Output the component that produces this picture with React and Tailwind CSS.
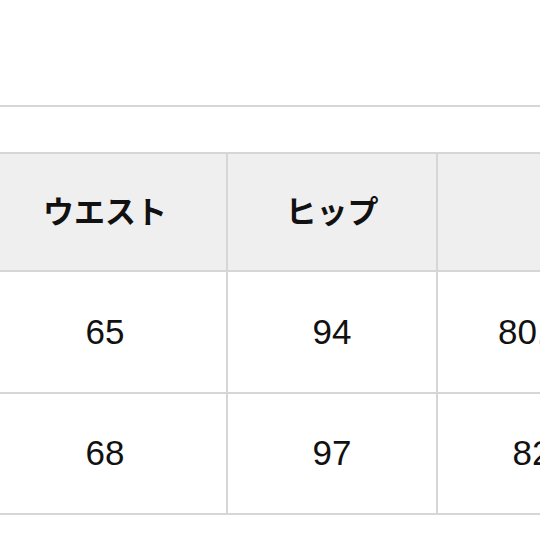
export default function App() {
  const header = ["ウエスト", "ヒップ", "股下"];
  const rows = [
    ["65", "94", "80.5"],
    ["68", "97", "82"],
  ];
  const widths = ["w-[244px]", "w-[210px]", "w-[190px]"];

  return (
    <div className="h-[540px] w-[540px] overflow-hidden bg-white">
      <div className="h-[105px]" />
      <div className="h-[2px] bg-[#d6d6d6]" />
      <div className="h-[45px]" />
      <div className="ml-[-16px] w-[700px] border-t-2 border-[#d6d6d6]">
        <div className="flex h-[118px] border-b-2 border-[#d6d6d6] bg-[#efefef]">
          {header.map((h, i) => (
            <div
              key={h}
              className={`${widths[i]} flex shrink-0 items-center justify-center border-r-2 border-[#d6d6d6] pb-[3px] text-[31px] font-bold text-[#111] [font-family:'Noto_Sans_CJK_JP',sans-serif]`}
            >
              {i < 2 ? h : ""}
            </div>
          ))}
        </div>
        {rows.map((r, ri) => (
          <div
            key={ri}
            className={`flex border-b-2 border-[#d6d6d6] ${ri === 0 ? "h-[122px]" : "h-[121px]"}`}
          >
            {r.map((v, i) => (
              <div
                key={i}
                className={`${widths[i]} flex shrink-0 items-center justify-center border-r-2 border-[#d6d6d6] text-[35px] text-[#111] [font-family:'Liberation_Sans',Arial,sans-serif]`}
              >
                {v}
              </div>
            ))}
          </div>
        ))}
      </div>
    </div>
  );
}
